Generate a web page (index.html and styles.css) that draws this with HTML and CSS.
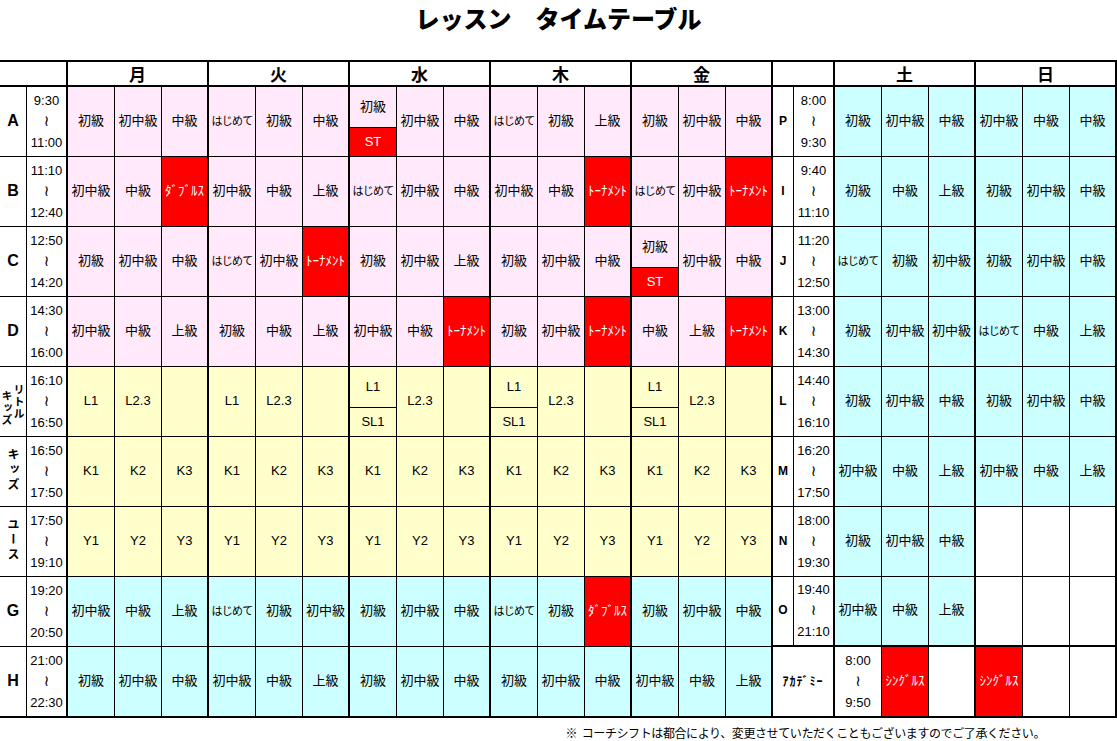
FILE: index.html
```html
<!DOCTYPE html>
<html lang="ja">
<head>
<meta charset="utf-8">
<title>レッスン タイムテーブル</title>
<link rel="stylesheet" href="styles.css">
</head>
<body>
<div class="title">レッスン　タイムテーブル</div>
<div class="tt">
  <!-- header -->
  <div class="c h e s2"></div>
  <div class="c h e s3 day">月</div>
  <div class="c h e s3 day">火</div>
  <div class="c h e s3 day">水</div>
  <div class="c h e s3 day">木</div>
  <div class="c h e s3 day">金</div>
  <div class="c h e s2"></div>
  <div class="c h e s3 day">土</div>
  <div class="c h e s3 day">日</div>

  <!-- A -->
  <div class="c lb">A</div>
  <div class="c tm e"><span>9:30</span><span class="wv">≀</span><span>11:00</span></div>
  <div class="c p">初級</div><div class="c p">初中級</div><div class="c p e">中級</div>
  <div class="c p hj">はじめて</div><div class="c p">初級</div><div class="c p e">中級</div>
  <div class="c p sp"><div class="t">初級</div><div class="u r">ST</div></div><div class="c p">初中級</div><div class="c p e">中級</div>
  <div class="c p hj">はじめて</div><div class="c p">初級</div><div class="c p e">上級</div>
  <div class="c p">初級</div><div class="c p">初中級</div><div class="c p e">中級</div>
  <div class="c rl">P</div>
  <div class="c tm e"><span>8:00</span><span class="wv">≀</span><span>9:30</span></div>
  <div class="c b">初級</div><div class="c b">初中級</div><div class="c b e">中級</div>
  <div class="c b">初中級</div><div class="c b">中級</div><div class="c b e">中級</div>

  <!-- B -->
  <div class="c lb">B</div>
  <div class="c tm e"><span>11:10</span><span class="wv">≀</span><span>12:40</span></div>
  <div class="c p">初中級</div><div class="c p">中級</div><div class="c r e">ﾀﾞﾌﾞﾙｽ</div>
  <div class="c p">初中級</div><div class="c p">中級</div><div class="c p e">上級</div>
  <div class="c p hj">はじめて</div><div class="c p">初中級</div><div class="c p e">中級</div>
  <div class="c p">初中級</div><div class="c p">中級</div><div class="c r e">ﾄｰﾅﾒﾝﾄ</div>
  <div class="c p hj">はじめて</div><div class="c p">初中級</div><div class="c r e">ﾄｰﾅﾒﾝﾄ</div>
  <div class="c rl">I</div>
  <div class="c tm e"><span>9:40</span><span class="wv">≀</span><span>11:10</span></div>
  <div class="c b">初級</div><div class="c b">中級</div><div class="c b e">上級</div>
  <div class="c b">初級</div><div class="c b">初中級</div><div class="c b e">中級</div>

  <!-- C -->
  <div class="c lb">C</div>
  <div class="c tm e"><span>12:50</span><span class="wv">≀</span><span>14:20</span></div>
  <div class="c p">初級</div><div class="c p">初中級</div><div class="c p e">中級</div>
  <div class="c p hj">はじめて</div><div class="c p">初中級</div><div class="c r e">ﾄｰﾅﾒﾝﾄ</div>
  <div class="c p">初級</div><div class="c p">初中級</div><div class="c p e">上級</div>
  <div class="c p">初級</div><div class="c p">初中級</div><div class="c p e">中級</div>
  <div class="c p sp"><div class="t">初級</div><div class="u r">ST</div></div><div class="c p">初中級</div><div class="c p e">中級</div>
  <div class="c rl">J</div>
  <div class="c tm e"><span>11:20</span><span class="wv">≀</span><span>12:50</span></div>
  <div class="c b hj">はじめて</div><div class="c b">初級</div><div class="c b e">初中級</div>
  <div class="c b">初級</div><div class="c b">初中級</div><div class="c b e">中級</div>

  <!-- D -->
  <div class="c lb">D</div>
  <div class="c tm e"><span>14:30</span><span class="wv">≀</span><span>16:00</span></div>
  <div class="c p">初中級</div><div class="c p">中級</div><div class="c p e">上級</div>
  <div class="c p">初級</div><div class="c p">中級</div><div class="c p e">上級</div>
  <div class="c p">初中級</div><div class="c p">中級</div><div class="c r e">ﾄｰﾅﾒﾝﾄ</div>
  <div class="c p">初級</div><div class="c p">初中級</div><div class="c r e">ﾄｰﾅﾒﾝﾄ</div>
  <div class="c p">中級</div><div class="c p">上級</div><div class="c r e">ﾄｰﾅﾒﾝﾄ</div>
  <div class="c rl">K</div>
  <div class="c tm e"><span>13:00</span><span class="wv">≀</span><span>14:30</span></div>
  <div class="c b">初級</div><div class="c b">初中級</div><div class="c b e">初中級</div>
  <div class="c b hj">はじめて</div><div class="c b">中級</div><div class="c b e">上級</div>

  <!-- Little kids -->
  <div class="c lk"><span class="vt lo">キッズ</span><span class="vt">リトル</span></div>
  <div class="c tm e"><span>16:10</span><span class="wv">≀</span><span>16:50</span></div>
  <div class="c y">L1</div><div class="c y">L2.3</div><div class="c y e"></div>
  <div class="c y">L1</div><div class="c y">L2.3</div><div class="c y e"></div>
  <div class="c y sp"><div class="t">L1</div><div class="u">SL1</div></div><div class="c y">L2.3</div><div class="c y e"></div>
  <div class="c y sp"><div class="t">L1</div><div class="u">SL1</div></div><div class="c y">L2.3</div><div class="c y e"></div>
  <div class="c y sp"><div class="t">L1</div><div class="u">SL1</div></div><div class="c y">L2.3</div><div class="c y e"></div>
  <div class="c rl">L</div>
  <div class="c tm e"><span>14:40</span><span class="wv">≀</span><span>16:10</span></div>
  <div class="c b">初級</div><div class="c b">初中級</div><div class="c b e">中級</div>
  <div class="c b">初級</div><div class="c b">初中級</div><div class="c b e">中級</div>

  <!-- Kids -->
  <div class="c"><span class="vt">キッズ</span></div>
  <div class="c tm e"><span>16:50</span><span class="wv">≀</span><span>17:50</span></div>
  <div class="c y">K1</div><div class="c y">K2</div><div class="c y e">K3</div>
  <div class="c y">K1</div><div class="c y">K2</div><div class="c y e">K3</div>
  <div class="c y">K1</div><div class="c y">K2</div><div class="c y e">K3</div>
  <div class="c y">K1</div><div class="c y">K2</div><div class="c y e">K3</div>
  <div class="c y">K1</div><div class="c y">K2</div><div class="c y e">K3</div>
  <div class="c rl">M</div>
  <div class="c tm e"><span>16:20</span><span class="wv">≀</span><span>17:50</span></div>
  <div class="c b">初中級</div><div class="c b">中級</div><div class="c b e">上級</div>
  <div class="c b">初中級</div><div class="c b">中級</div><div class="c b e">上級</div>

  <!-- Youth -->
  <div class="c"><span class="vt">ユース</span></div>
  <div class="c tm e"><span>17:50</span><span class="wv">≀</span><span>19:10</span></div>
  <div class="c y">Y1</div><div class="c y">Y2</div><div class="c y e">Y3</div>
  <div class="c y">Y1</div><div class="c y">Y2</div><div class="c y e">Y3</div>
  <div class="c y">Y1</div><div class="c y">Y2</div><div class="c y e">Y3</div>
  <div class="c y">Y1</div><div class="c y">Y2</div><div class="c y e">Y3</div>
  <div class="c y">Y1</div><div class="c y">Y2</div><div class="c y e">Y3</div>
  <div class="c rl">N</div>
  <div class="c tm e"><span>18:00</span><span class="wv">≀</span><span>19:30</span></div>
  <div class="c b">初級</div><div class="c b">初中級</div><div class="c b e">中級</div>
  <div class="c"></div><div class="c"></div><div class="c e"></div>

  <!-- G -->
  <div class="c lb">G</div>
  <div class="c tm e"><span>19:20</span><span class="wv">≀</span><span>20:50</span></div>
  <div class="c b">初中級</div><div class="c b">中級</div><div class="c b e">上級</div>
  <div class="c b hj">はじめて</div><div class="c b">初級</div><div class="c b e">初中級</div>
  <div class="c b">初級</div><div class="c b">初中級</div><div class="c b e">中級</div>
  <div class="c b hj">はじめて</div><div class="c b">初級</div><div class="c r e">ﾀﾞﾌﾞﾙｽ</div>
  <div class="c b">初級</div><div class="c b">初中級</div><div class="c b e">中級</div>
  <div class="c rl bt">O</div>
  <div class="c tm e bt"><span>19:40</span><span class="wv">≀</span><span>21:10</span></div>
  <div class="c b bt">初中級</div><div class="c b bt">中級</div><div class="c b e bt">上級</div>
  <div class="c bt"></div><div class="c bt"></div><div class="c e bt"></div>

  <!-- H -->
  <div class="c lb">H</div>
  <div class="c tm e"><span>21:00</span><span class="wv">≀</span><span>22:30</span></div>
  <div class="c b">初級</div><div class="c b">初中級</div><div class="c b e">中級</div>
  <div class="c b">初中級</div><div class="c b">中級</div><div class="c b e">上級</div>
  <div class="c b">初級</div><div class="c b">初中級</div><div class="c b e">中級</div>
  <div class="c b">初級</div><div class="c b">初中級</div><div class="c b e">中級</div>
  <div class="c b">初中級</div><div class="c b">中級</div><div class="c b e">上級</div>
  <div class="c s2 e aca">ｱｶﾃﾞﾐｰ</div>
  <div class="c tm"><span>8:00</span><span class="wv">≀</span><span>9:50</span></div>
  <div class="c r">ｼﾝｸﾞﾙｽ</div><div class="c e"></div>
  <div class="c r">ｼﾝｸﾞﾙｽ</div><div class="c"></div><div class="c e"></div>
</div>
<div class="note">※&nbsp; コーチシフトは都合により、変更させていただくこともございますのでご了承ください。</div>
</body>
</html>
```

FILE: styles.css
```css
* { box-sizing: border-box; }
html, body { margin: 0; padding: 0; overflow: hidden; background: #fff; }
body {
  font-family: "Liberation Sans", "Noto Sans CJK JP", sans-serif;
  color: #000;
  width: 1117px;
  height: 741px;
}
.title {
  height: 60px;
  padding-top: 4px;
  text-align: center;
  font-family: "Noto Sans CJK JP", sans-serif;
  font-weight: 900;
  font-size: 24px;
  line-height: 28px;
  letter-spacing: 0;
}
.tt {
  display: grid;
  grid-template-columns: 27px 41px repeat(15, 47px) 21px 41px repeat(6, 47px);
  grid-template-rows: 25px repeat(9, 70px);
  border-top: 2px solid #000;
  border-bottom: 1px solid #000;
}
.c {
  border-right: 1px solid #000;
  border-bottom: 1px solid #000;
  display: flex;
  align-items: center;
  justify-content: center;
  font-size: 13px;
  line-height: 16px;
  padding-bottom: 2px;
  background: #fff;
  white-space: nowrap;
  overflow: hidden;
}
.e { border-right-width: 2px; }
.h { border-bottom-width: 2px; }
.bt { border-bottom-width: 2px; }
.s2 { grid-column: span 2; }
.s3 { grid-column: span 3; }
.day { font-family: "Noto Sans CJK JP", sans-serif; font-weight: 700; font-size: 17px; padding-bottom: 0; }
.p { background: #ffe9fa; }
.y { background: #ffffcc; }
.b { background: #ccffff; }
.r { background: #ff0000; color: #fff; }
.hj { font-size: 11px; letter-spacing: -0.8px; }
.lb { font-weight: 700; font-size: 16px; }
.rl { font-weight: 700; font-size: 12px; }
.tm { flex-direction: column; line-height: 21px; padding-bottom: 1px; }
.wv { font-family: "DejaVu Sans", sans-serif; font-size: 15px; }
.sp { flex-direction: column; align-items: stretch; padding-bottom: 0; }
.sp .t {
  height: 41px;
  border-bottom: 1px solid #000;
  display: flex;
  align-items: center;
  justify-content: center;
}
.sp .u { flex: 1; display: flex; align-items: center; justify-content: center; }
.vt {
  writing-mode: vertical-rl;
  font-family: "Noto Sans CJK JP", sans-serif;
  font-weight: 700;
  font-size: 12px;
  line-height: 14px;
  letter-spacing: 3px;
}
.lk { gap: 0; padding-bottom: 0; }
.lk .vt { font-size: 11px; line-height: 12px; letter-spacing: 1px; }
.lk .lo { margin-top: 12px; }
.aca { font-family: "Noto Sans CJK JP", sans-serif; font-weight: 700; font-size: 12px; letter-spacing: 1px; }
.note {
  margin-top: 7px;
  padding-right: 72px;
  text-align: right;
  font-family: "Noto Sans CJK JP", sans-serif;
  font-size: 12px;
  line-height: 16px;
  letter-spacing: -0.4px;
}
```
